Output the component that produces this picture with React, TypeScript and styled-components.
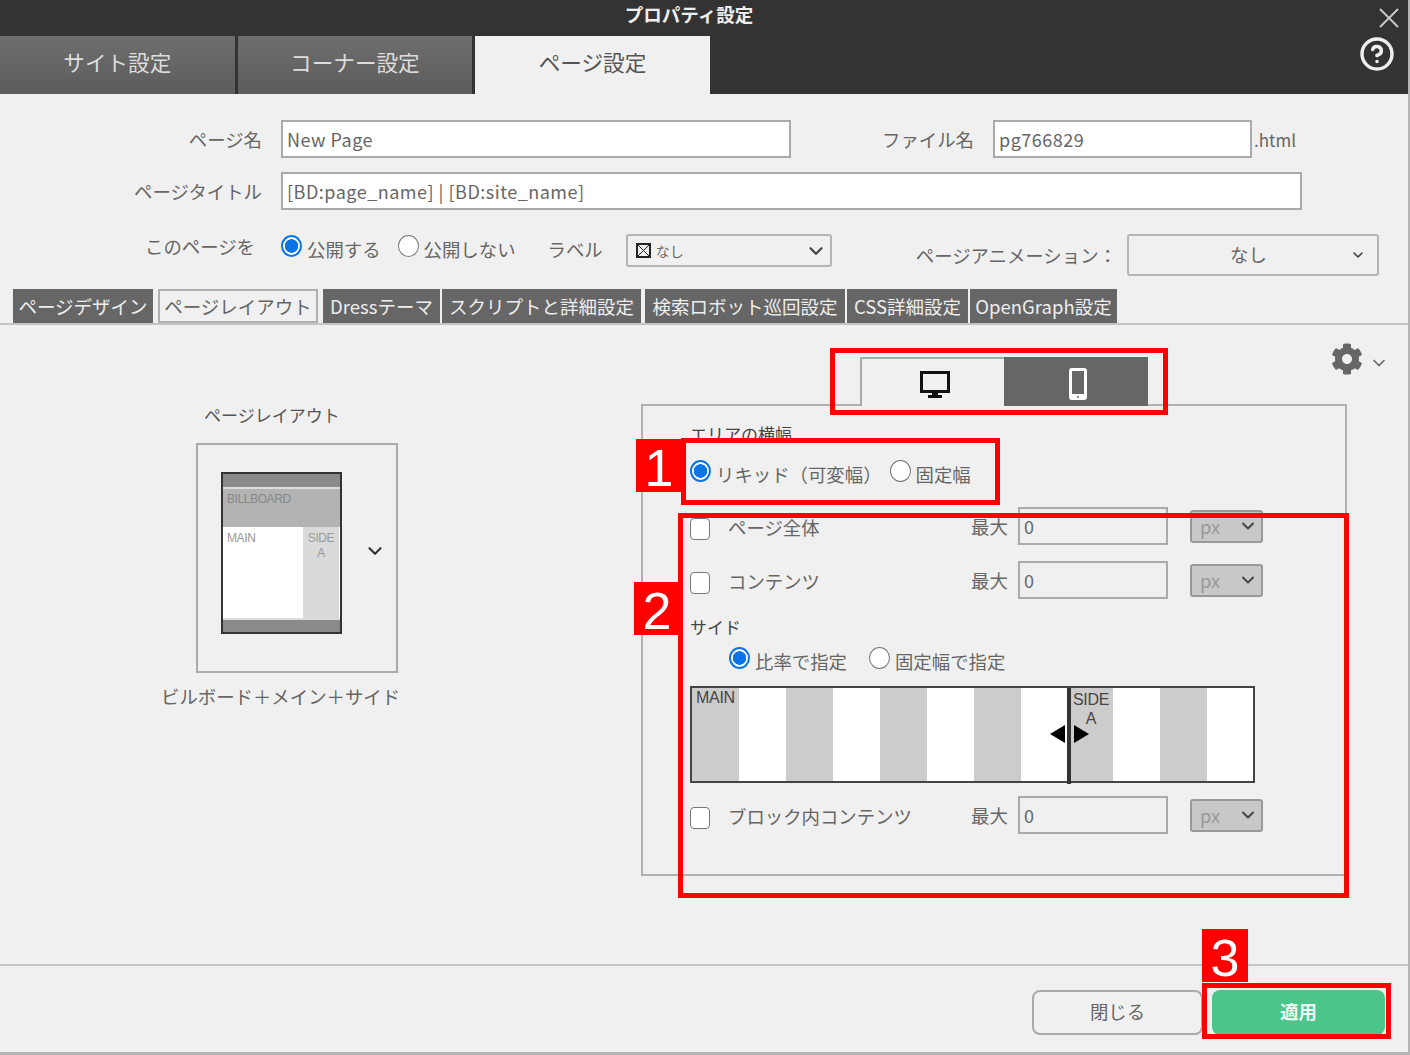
import React from 'react';
import styled, { createGlobalStyle } from 'styled-components';
import { FaCog } from 'react-icons/fa';
import { ChevronDown, CircleHelp, X } from 'lucide-react';

const GlobalStyle = createGlobalStyle`
	html, body {
		margin: 0;
		padding: 0;
		background: #f0f0f0;
	}

	* {
		box-sizing: border-box;
	}

	body {
		font-family: "Noto Sans CJK JP", "Noto Sans", sans-serif;
		font-size: 18.4px;
		color: #666;
	}
`;

const Page = styled.div`
	position: relative;
	width: 1410px;
	height: 1055px;
	display: flex;
	flex-direction: column;
	overflow: hidden;
	background: #f0f0f0;
	border-right: 2px solid #b5b5b5;
	border-bottom: 3px solid #b5b5b5;
`;

const Header = styled.header`
	flex: none;
	height: 94px;
	background: #333;
	display: flex;
	flex-direction: column;
`;

const TitleRow = styled.div`
	height: 36px;
	display: flex;
	align-items: flex-start;
`;

const Title = styled.h1`
	flex: 1;
	margin: 0;
	text-align: center;
	font-size: 18.5px;
	line-height: 28px;
	font-weight: 700;
	color: #eee;
`;

const CloseButton = styled.div`
	width: 30px;
	padding-top: 1px;
	color: #ccc;
	line-height: 0;

	svg {
		margin-left: -6px;
	}
`;

const TabsRow = styled.div`
	flex: 1;
	display: flex;
	gap: 3px;
`;

const MainTab = styled.div<{ $active?: boolean }>`
	flex: 0 0 234.6px;
	display: flex;
	align-items: center;
	justify-content: center;
	font-size: 21.6px;
	color: ${(p) => (p.$active ? '#555' : '#ddd')};
	background: ${(p) =>
		p.$active ? '#f0f0f0' : 'linear-gradient(180deg, #6e6e6e, #5c5c5c)'};
	padding-bottom: 8px;
`;

const HelpButton = styled.div`
	margin-left: auto;
	margin-right: 13px;
	color: #f0f0f0;
	line-height: 0;
`;

const Form = styled.section`
	flex: none;
	height: 231px;
	padding-top: 26px;
	border-bottom: 2px solid #c4c4c4;
	display: flex;
	flex-direction: column;
`;

const FormRow = styled.div<{ $height: number; $gap?: number }>`
	height: ${(p) => p.$height}px;
	margin-bottom: ${(p) => p.$gap ?? 0}px;
	display: flex;
	align-items: center;
`;

const FieldLabel = styled.label<{ $width?: number }>`
	width: ${(p) => p.$width ?? 262}px;
	margin-right: 19px;
	text-align: right;
	white-space: nowrap;
	flex: none;
`;

const PublishLabel = styled(FieldLabel)`
	width: 255px;
	margin-right: 26px;
	padding-bottom: 18px;
`;

const TextField = styled.input<{ $width: number; $disabled?: boolean }>`
	width: ${(p) => p.$width}px;
	height: 38px;
	flex: none;
	padding: 0 4px;
	border: 2px solid #aaa;
	border-radius: 0;
	background: ${(p) => (p.$disabled ? '#f0f0f0' : '#fff')};
	font: inherit;
	font-size: 18px;
	letter-spacing: 0.5px;
	color: #666;
	outline: none;
`;

const Suffix = styled.span`
	margin-left: 2px;
	font-size: 17px;
`;

const RadioGroup = styled.div<{ $offset?: number; $top?: number; $bottom?: number }>`
	display: flex;
	align-items: center;
	margin-left: ${(p) => p.$offset ?? 0}px;
	margin-top: ${(p) => p.$top ?? 0}px;
	padding-bottom: ${(p) => p.$bottom ?? 0}px;
	white-space: nowrap;
`;

const Radio = styled.input.attrs({ type: 'radio' })`
	appearance: none;
	width: 21px;
	height: 22px;
	margin: 0 5px 3px 0;
	flex: none;
	border: 1.5px solid #777;
	border-radius: 50%;
	background: #fff;

	&:checked {
		border: 2px solid #0a74e8;
		background: radial-gradient(circle, #0a74e8 0 6.5px, #fff 7px);
	}
`;

const RadioText = styled.span<{ $gap?: number }>`
	margin-right: ${(p) => p.$gap ?? 17}px;
	padding-top: 3px;
`;

const InlineLabel = styled.span`
	margin-right: 23px;
	padding-top: 3px;
`;

const SelectBox = styled.div<{
	$width: number;
	$height: number;
	$muted?: boolean;
	$iconPad?: number;
}>`
	width: ${(p) => p.$width}px;
	height: ${(p) => p.$height}px;
	flex: none;
	display: flex;
	align-items: center;
	padding: 0 ${(p) => p.$iconPad ?? 3}px 0 8px;
	border: 2px solid ${(p) => (p.$muted ? '#999' : '#b4b4b4')};
	border-radius: 3px;
	background: ${(p) => (p.$muted ? '#c8c8c8' : '#f0f0f0')};
	color: ${(p) => (p.$muted ? '#999' : '#666')};

	svg {
		margin-left: auto;
		color: #444;
		flex: none;
	}
`;

const LabelSelect = styled(SelectBox)`
	align-self: flex-start;
	margin-right: 84px;
`;

const UnitSelect = styled(SelectBox)`
	margin-left: 22px;
`;

const LabelMark = styled.span`
	width: 15px;
	height: 15px;
	margin-right: 5px;
	border: 2px solid #222;
	background:
		linear-gradient(45deg, transparent 46%, #222 46% 54%, transparent 54%),
		linear-gradient(-45deg, transparent 46%, #222 46% 54%, transparent 54%);
`;

const SmallText = styled.span`
	font-size: 14px;
`;

const AnimationLabel = styled.span`
	white-space: nowrap;
	margin-right: 10px;
`;

const CenteredValue = styled.span`
	flex: 1;
	text-align: center;
	padding-left: 10px;
	padding-bottom: 3px;
`;

const SubTabs = styled.nav`
	margin-top: auto;
	padding-left: 13px;
	height: 34px;
	display: flex;
`;

const SubTab = styled.div<{ $width: number; $gap: number; $active?: boolean }>`
	width: ${(p) => p.$width}px;
	margin-right: ${(p) => p.$gap}px;
	display: flex;
	align-items: center;
	justify-content: center;
	white-space: nowrap;
	font-size: 18.5px;
	line-height: 1;
	color: ${(p) => (p.$active ? '#666' : '#eee')};
	background: ${(p) => (p.$active ? '#f0f0f0' : '#666')};
	border: ${(p) => (p.$active ? '2px solid #b0b0b0' : 'none')};
`;

const Main = styled.main`
	flex: 1;
	display: flex;
	min-height: 0;
`;

const LeftColumn = styled.div`
	width: 641px;
	flex: none;
	padding: 78px 0 0 161px;
	display: flex;
	flex-direction: column;
	align-items: flex-start;
`;

const LayoutTitle = styled.div`
	margin-left: 43px;
	font-size: 17px;
	line-height: 24px;
	color: #555;
`;

const LayoutBox = styled.div`
	width: 202px;
	height: 230px;
	margin: 16px 0 10px 35px;
	padding: 27px 0 0 23px;
	border: 2px solid #aaa;
	display: flex;
	align-items: flex-start;
`;

const Thumbnail = styled.div`
	width: 121px;
	height: 162px;
	border: 2px solid #333;
	background: #fff;
	display: flex;
	flex-direction: column;
	font-family: "Liberation Sans", sans-serif;
	font-size: 12px;
	letter-spacing: -0.4px;
	color: #999;
`;

const ThumbBar = styled.div<{ $height: number; $top?: boolean }>`
	height: ${(p) => p.$height}px;
	flex: none;
	background: #8a8a8a;
	border-${(p) => (p.$top ? 'bottom' : 'top')}: 2px solid #ddd;
`;

const ThumbBillboard = styled.div`
	height: 38px;
	flex: none;
	padding: 3px 4px;
	background: #b3b3b3;
	color: #888;
`;

const ThumbBody = styled.div`
	flex: 1;
	display: flex;
`;

const ThumbMain = styled.div`
	flex: 1;
	padding: 4px;
`;

const ThumbSide = styled.div`
	width: 36px;
	margin-right: 1px;
	padding-top: 4px;
	text-align: center;
	background: #dadada;
	line-height: 15px;
`;

const ThumbChevron = styled.div`
	margin: 68px 0 0 22px;
	color: #333;
	line-height: 0;
`;

const LayoutCaption = styled.div`
	white-space: nowrap;
`;

const RightColumn = styled.div`
	flex: 1;
	display: flex;
	flex-direction: column;
`;

const DeviceRow = styled.div`
	height: 62px;
	margin-top: 18px;
	padding-left: 219px;
	display: flex;
	align-items: flex-start;
`;

const DeviceTab = styled.div<{ $active?: boolean }>`
	position: relative;
	z-index: 1;
	width: 144px;
	height: 49px;
	margin-top: 14px;
	padding: 4px 0 0 4px;
	display: flex;
	align-items: center;
	justify-content: center;
	background: ${(p) => (p.$active ? '#f0f0f0' : '#666')};
	border-left: ${(p) => (p.$active ? '2px solid #aaa' : 'none')};
	border-top: ${(p) => (p.$active ? '2px solid #aaa' : 'none')};
`;

const GearButton = styled.div`
	margin-left: auto;
	margin-right: 19px;
	display: flex;
	align-items: flex-start;
	color: #666;

	svg + svg {
		margin: 10px 0 0 6px;
	}
`;

const Panel = styled.div`
	width: 706px;
	height: 472px;
	margin-top: -1px;
	padding: 17px 0 0 47px;
	border: 2px solid #b0b0b0;
	display: flex;
	flex-direction: column;
`;

const PanelHeading = styled.div<{ $top?: number }>`
	margin-top: ${(p) => p.$top ?? 0}px;
	font-size: 17px;
	line-height: 22px;
	color: #444;
`;

const PanelRadioRow = styled(RadioGroup)`
	height: 26px;
`;

const LimitRowWrapper = styled.div<{ $top: number }>`
	height: 38px;
	margin-top: ${(p) => p.$top}px;
	display: flex;
	align-items: center;
`;

const Checkbox = styled.input.attrs({ type: 'checkbox' })`
	appearance: none;
	width: 20px;
	height: 22px;
	margin: 6px 18px 0 0;
	flex: none;
	border: 1.5px solid #777;
	border-radius: 4px;
	background: #fff;
`;

const LimitLabel = styled.span`
	width: 243px;
	flex: none;
	padding-top: 2px;
`;

const MaxLabel = styled.span`
	width: 47px;
	flex: none;
`;

const Slider = styled.div`
	width: 565px;
	height: 97px;
	margin-top: 14px;
	border: 2px solid #444;
	display: flex;
	position: relative;
	background: #fff;
`;

const SliderMain = styled.div`
	width: 375px;
	flex: none;
	padding: 0 4px;
	background: repeating-linear-gradient(90deg, #ccc 0 47px, #fff 47px 94px);
`;

const SliderSide = styled.div`
	flex: 1;
	background: repeating-linear-gradient(90deg, #ccc -5px, #ccc 42px, #fff 42px, #fff 89px);
`;

const SliderText = styled.div`
	font-family: "Liberation Sans", sans-serif;
	font-size: 16px;
	line-height: 19px;
	color: #444;
	letter-spacing: -0.3px;
`;

const SideText = styled(SliderText)`
	width: 40px;
	padding-top: 2px;
	text-align: center;
`;

const SliderHandle = styled.div`
	width: 4px;
	flex: none;
	margin-bottom: -3px;
	background: #333;
	z-index: 1;
`;

const HandleArrows = styled.svg`
	position: absolute;
	left: 357px;
	top: 36px;
`;

const Footer = styled.footer`
	flex: none;
	height: 88px;
	padding: 24px 23px 0 0;
	border-top: 2px solid #c4c4c4;
	display: flex;
	justify-content: flex-end;
	align-items: flex-start;
	gap: 9px;
`;

const FooterButton = styled.button<{ $primary?: boolean }>`
	width: ${(p) => (p.$primary ? 173 : 171)}px;
	height: 45px;
	padding: 0 0 4px;
	border: ${(p) => (p.$primary ? 'none' : '2px solid #aaa')};
	border-radius: 8px;
	background: ${(p) => (p.$primary ? '#4bc58a' : '#f0f0f0')};
	color: ${(p) => (p.$primary ? '#eefaf4' : '#666')};
	font: inherit;
	font-weight: ${(p) => (p.$primary ? 700 : 400)};
`;

const RedFrame = styled.div<{ $x: number; $y: number; $w: number; $h: number }>`
	position: absolute;
	left: ${(p) => p.$x}px;
	top: ${(p) => p.$y}px;
	width: ${(p) => p.$w}px;
	height: ${(p) => p.$h}px;
	border: 5px solid #f00;
	z-index: 5;
`;

const RedBadge = styled.div<{ $x: number; $y: number }>`
	position: absolute;
	left: ${(p) => p.$x}px;
	top: ${(p) => p.$y}px;
	width: 46px;
	height: 53px;
	padding-top: 5px;
	background: #f00;
	color: #fff;
	font-family: "Liberation Sans", sans-serif;
	font-size: 52px;
	line-height: 48px;
	text-align: center;
	z-index: 6;
`;

const LimitRow = ({ label, top }: { label: string; top: number }) => (
	<LimitRowWrapper $top={top}>
		<Checkbox />
		<LimitLabel>{label}</LimitLabel>
		<MaxLabel>最大</MaxLabel>
		<TextField $width={150} $disabled defaultValue="0" readOnly />
		<UnitSelect $width={73} $height={33} $muted>
			px
			<ChevronDown size={20} strokeWidth={2.4} />
		</UnitSelect>
	</LimitRowWrapper>
);

const MonitorIcon = () => (
	<svg width="30" height="28" viewBox="0 0 30 28">
		<rect x="1.5" y="1.5" width="27" height="19" fill="none" stroke="#111" strokeWidth="3" />
		<rect x="12" y="21" width="6" height="4" fill="#111" />
		<rect x="8" y="24" width="14" height="3" fill="#111" />
	</svg>
);

const PhoneIcon = () => (
	<svg width="20" height="34" viewBox="0 0 20 34">
		<rect x="1" y="1" width="18" height="32" rx="3" fill="#fff" />
		<rect x="4" y="4" width="12" height="23" fill="#666" />
		<circle cx="10" cy="30" r="1" fill="#666" />
	</svg>
);

const subTabs = [
	{ label: 'ページデザイン', width: 140, gap: 5 },
	{ label: 'ページレイアウト', width: 160, gap: 5, active: true },
	{ label: 'Dressテーマ', width: 117, gap: 2 },
	{ label: 'スクリプトと詳細設定', width: 199, gap: 4 },
	{ label: '検索ロボット巡回設定', width: 200, gap: 2 },
	{ label: 'CSS詳細設定', width: 121, gap: 2 },
	{ label: 'OpenGraph設定', width: 147, gap: 0 }
];

const App = () => {
	return (
		<Page>
			<GlobalStyle />
			<Header>
				<TitleRow>
					<Title>プロパティ設定</Title>
					<CloseButton>
						<X size={34} strokeWidth={1.3} />
					</CloseButton>
				</TitleRow>
				<TabsRow>
					<MainTab>サイト設定</MainTab>
					<MainTab>コーナー設定</MainTab>
					<MainTab $active>ページ設定</MainTab>
					<HelpButton>
						<CircleHelp size={36} strokeWidth={2.3} />
					</HelpButton>
				</TabsRow>
			</Header>

			<Form>
				<FormRow $height={38} $gap={14}>
					<FieldLabel>ページ名</FieldLabel>
					<TextField $width={510} defaultValue="New Page" readOnly />
					<FieldLabel $width={183}>ファイル名</FieldLabel>
					<TextField $width={259} defaultValue="pg766829" readOnly />
					<Suffix>.html</Suffix>
				</FormRow>
				<FormRow $height={38} $gap={24}>
					<FieldLabel>ページタイトル</FieldLabel>
					<TextField
						$width={1021}
						defaultValue="[BD:page_name] | [BD:site_name]"
						readOnly
					/>
				</FormRow>
				<FormRow $height={42}>
					<PublishLabel>このページを</PublishLabel>
					<RadioGroup $bottom={16}>
						<Radio name="publish" defaultChecked />
						<RadioText>公開する</RadioText>
						<Radio name="publish" />
						<RadioText $gap={32}>公開しない</RadioText>
						<InlineLabel>ラベル</InlineLabel>
					</RadioGroup>
					<LabelSelect $width={206} $height={33}>
						<LabelMark />
						<SmallText>なし</SmallText>
						<ChevronDown size={22} strokeWidth={2.4} />
					</LabelSelect>
					<AnimationLabel>{'ページアニメーション\uFF1A'}</AnimationLabel>
					<SelectBox $width={252} $height={42} $iconPad={11}>
						<CenteredValue>なし</CenteredValue>
						<ChevronDown size={16} strokeWidth={2.4} />
					</SelectBox>
				</FormRow>
				<SubTabs>
					{subTabs.map((tab) => (
						<SubTab
							key={tab.label}
							$width={tab.width}
							$gap={tab.gap}
							$active={tab.active}
						>
							{tab.label}
						</SubTab>
					))}
				</SubTabs>
			</Form>

			<Main>
				<LeftColumn>
					<LayoutTitle>ページレイアウト</LayoutTitle>
					<LayoutBox>
						<Thumbnail>
							<ThumbBar $height={15} $top />
							<ThumbBillboard>BILLBOARD</ThumbBillboard>
							<ThumbBody>
								<ThumbMain>MAIN</ThumbMain>
								<ThumbSide>
									SIDE
									<br />A
								</ThumbSide>
							</ThumbBody>
							<ThumbBar $height={14} />
						</Thumbnail>
						<ThumbChevron>
							<ChevronDown size={22} strokeWidth={2.4} />
						</ThumbChevron>
					</LayoutBox>
					<LayoutCaption>{'ビルボード\uFF0Bメイン\uFF0Bサイド'}</LayoutCaption>
				</LeftColumn>

				<RightColumn>
					<DeviceRow>
						<DeviceTab $active>
							<MonitorIcon />
						</DeviceTab>
						<DeviceTab>
							<PhoneIcon />
						</DeviceTab>
						<GearButton>
							<FaCog size={32} />
							<ChevronDown size={20} />
						</GearButton>
					</DeviceRow>
					<Panel>
						<PanelHeading>エリアの横幅</PanelHeading>
						<PanelRadioRow $top={14}>
							<Radio name="width" defaultChecked />
							<RadioText $gap={8}>{'リキッド\uFF08可変幅\uFF09'}</RadioText>
							<Radio name="width" />
							<RadioText>固定幅</RadioText>
						</PanelRadioRow>
						<LimitRow label="ページ全体" top={22} />
						<LimitRow label="コンテンツ" top={16} />
						<PanelHeading $top={17}>サイド</PanelHeading>
						<PanelRadioRow $offset={39} $top={8}>
							<Radio name="side" defaultChecked />
							<RadioText $gap={22}>比率で指定</RadioText>
							<Radio name="side" />
							<RadioText>固定幅で指定</RadioText>
						</PanelRadioRow>
						<Slider>
							<SliderMain>
								<SliderText>MAIN</SliderText>
							</SliderMain>
							<SliderHandle />
							<SliderSide>
								<SideText>
									SIDE
									<br />A
								</SideText>
							</SliderSide>
							<HandleArrows width={42} height={20} viewBox="0 0 42 20">
								<path d="M16 1V19L1 10Z" fill="#000" />
								<path d="M25 1V19L40 10Z" fill="#000" />
							</HandleArrows>
						</Slider>
						<LimitRow label="ブロック内コンテンツ" top={13} />
					</Panel>
				</RightColumn>
			</Main>

			<Footer>
				<FooterButton>閉じる</FooterButton>
				<FooterButton $primary>適用</FooterButton>
			</Footer>

			<RedFrame $x={830} $y={348} $w={338} $h={67} />
			<RedFrame $x={681} $y={438} $w={319} $h={67} />
			<RedFrame $x={678} $y={513} $w={671} $h={385} />
			<RedFrame $x={1202} $y={983} $w={189} $h={56} />
			<RedBadge $x={636} $y={439}>1</RedBadge>
			<RedBadge $x={634} $y={582}>2</RedBadge>
			<RedBadge $x={1202} $y={929}>3</RedBadge>
		</Page>
	);
};

export default App;
